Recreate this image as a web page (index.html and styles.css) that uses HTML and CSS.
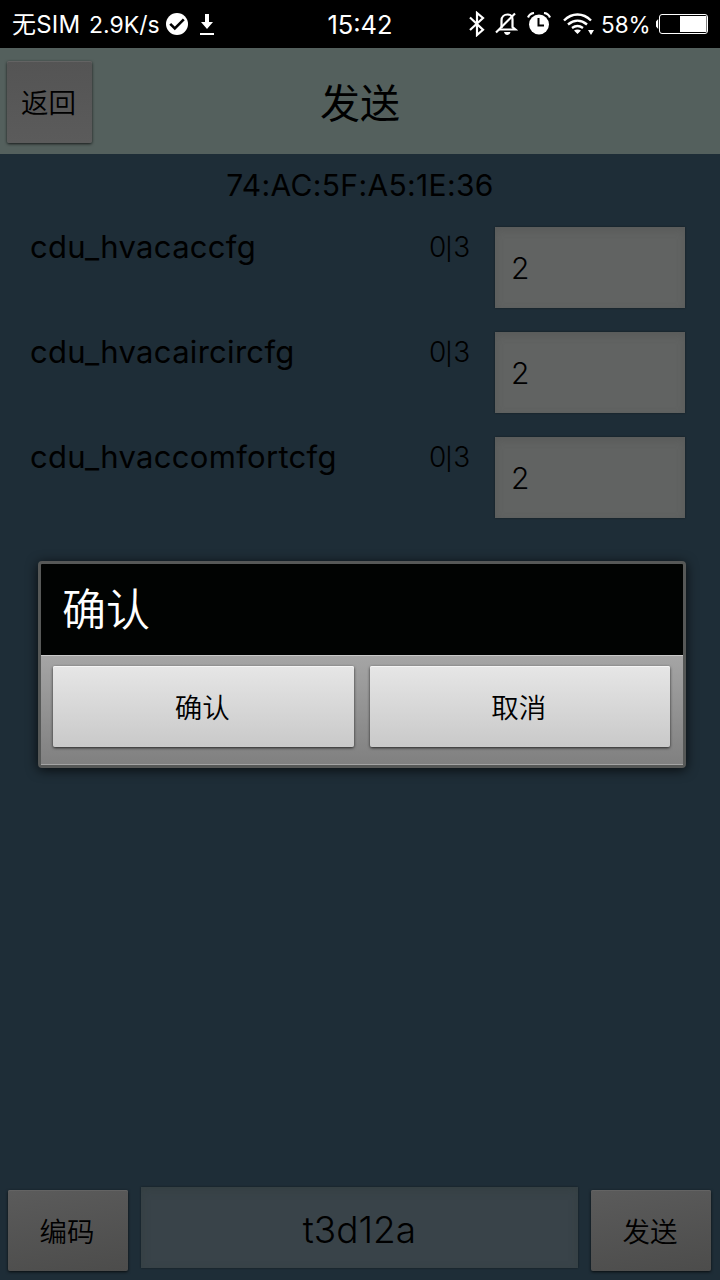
FILE: index.html
```html
<!DOCTYPE html>
<html lang="zh-CN">
<head>
<meta charset="utf-8">
<title>发送</title>
<link rel="stylesheet" href="styles.css">
</head>
<body>
<div class="screen">
  <div class="status">
    <div class="status-left">
      <span class="carrier">无SIM</span>
      <span class="speed">2.9K/s</span>
      <svg class="ic-check" width="22" height="22" viewBox="0 0 22 22"><circle cx="11" cy="11" r="11" fill="#fff"/><path d="M4.200 10.800l4.600 4.600 9-9" fill="none" stroke="#000" stroke-width="2.600"/></svg>
      <svg class="ic-down" width="14" height="22" viewBox="0 0 14 22"><path d="M5 0h4v8h4l-6 7-6-7h4zM0 19h14v2H0z" fill="#fff"/></svg>
    </div>
    <div class="clock">15:42</div>
    <div class="status-right">
      <svg class="ic-bt" width="16" height="26" viewBox="0 0 16 26"><path d="M1 6.500l13 12.300-6 5.200V2l6 5L1 19" fill="none" stroke="#fff" stroke-width="2.200"/></svg>
      <svg class="ic-bell" width="23" height="24" viewBox="0 0 23 24"><path d="M4 17.500h16.500l-3-2.500V7.500c0-3-2-5-5-5s-6 2-6 6V16" fill="none" stroke="#fff" stroke-width="2.200"/><path d="M1 20.500L20 1.500" stroke="#fff" stroke-width="2.200"/><path d="M9 20h6.500c-.8 4-5.700 4-6.500 0z" fill="#fff"/></svg>
      <svg class="ic-alarm" width="24" height="23" viewBox="0 0 24 23"><circle cx="12" cy="12.500" r="10" fill="#fff"/><path d="M1 5.500C2 3 4.500 1.300 7 1M17 1c2.500.3 5 2 6 4.500" fill="none" stroke="#fff" stroke-width="2.200"/><path d="M11.500 6v7.500H17" fill="none" stroke="#000" stroke-width="2"/></svg>
      <svg class="ic-wifi" width="31" height="23" viewBox="0 0 31 23"><g fill="none" stroke="#fff" stroke-width="2.400"><path d="M1 7.500c8-8 19-8 27 0"/><path d="M5 11.500c6-5 13-5 19 0"/><path d="M9 15c4-2.800 7-2.800 11 0"/></g><path d="M11 17.500c2-1.300 5-1.300 7 0L14.500 21zM25 17h6l-3 5z" fill="#fff"/></svg>
      <span class="pct">58%</span>
      <svg class="ic-batt" width="53" height="20" viewBox="0 0 53 20"><rect x="3.500" y=".5" width="48" height="19" rx="2.500" fill="none" stroke="#fff" stroke-width="1"/><path d="M24 2h26.500v16H24zM0 7.500L2.200 5v10L0 12.500z" fill="#fff"/></svg>
    </div>
  </div>
  <header class="header">
    <div class="btn dim back">返回</div>
    <h1 class="title">发送</h1>
    <div class="header-end"></div>
  </header>
  <main class="content">
    <div class="mac"><span>74:AC:5F:A5:1E:36</span></div>
    <div class="row"><span class="name">cdu_hvacaccfg</span><span class="range">0<span class="bar">|</span>3</span><div class="field">2</div></div>
    <div class="row"><span class="name">cdu_hvacaircircfg</span><span class="range">0<span class="bar">|</span>3</span><div class="field">2</div></div>
    <div class="row"><span class="name">cdu_hvaccomfortcfg</span><span class="range">0<span class="bar">|</span>3</span><div class="field">2</div></div>
  </main>
  <footer class="footer">
    <div class="btn dim side">编码</div>
    <div class="code">t3d12a</div>
    <div class="btn dim side">发送</div>
  </footer>
  <div class="dialog">
    <div class="dialog-title">确认</div>
    <div class="dialog-actions">
      <div class="btn lit">确认</div>
      <div class="btn lit">取消</div>
    </div>
  </div>
</div>
</body>
</html>
```
FILE: styles.css
```css
* { box-sizing: border-box; }
body { margin: 0; background: #1e2d37; }
.screen {
  position: relative;
  width: 720px;
  height: 1280px;
  display: flex;
  flex-direction: column;
  overflow: hidden;
  background: #1e2d37;
  color: #000;
  font-family: Inter, "Noto Sans CJK SC", sans-serif;
  white-space: nowrap;
}

/* Status bar */
.status {
  height: 48px;
  display: grid;
  grid-template-columns: 1fr auto 1fr;
  align-items: center;
  padding: 0 12px;
  background: #000;
  color: #fff;
}
.status-left, .status-right { display: flex; align-items: center; height: 48px; }
.status-right { justify-content: flex-end; padding-bottom: 2px; }
.status-left { padding-bottom: 4px; }
.carrier { font-size: 24px; line-height: 48px; width: 68px; letter-spacing: 0.2px; padding-top: 5px; }
.speed { font-size: 23px; line-height: 48px; width: 70px; margin-left: 9px; padding-top: 5px; }
.ic-check { margin-left: 7px; margin-top: 2px; }
.ic-down { margin-left: 12px; margin-top: 5px; }
.clock { font-size: 25.5px; line-height: 48px; padding-top: 1px; }
.ic-bt { margin-top: 1px; }
.ic-bell { margin-left: 10px; }
.ic-alarm { margin-left: 9px; }
.ic-wifi { margin-left: 12px; margin-top: 1px; }
.pct { font-size: 22.5px; width: 48px; margin-left: 7px; padding-top: 1px; }
.ic-batt { margin-left: 7px; margin-right: -1px; }

/* Header */
.header {
  height: 106px;
  display: grid;
  grid-template-columns: 85px 1fr 85px;
  align-items: center;
  padding: 0 7px;
  background: #54605d;
}
.title { margin: 0; text-align: center; font-size: 40px; font-weight: 400; line-height: 60px; padding-top: 6px; }

/* Buttons */
.btn {
  height: 82px;
  display: flex;
  align-items: center;
  justify-content: center;
  padding-right: 2px;
  padding-bottom: 1px;
  border-radius: 2px;
  font-size: 27.5px;
  font-weight: 350;
}
.dim {
  background: linear-gradient(170deg, #5b5b5b, #4c4c4b);
  box-shadow: 0 1px 3px rgba(0, 0, 0, .75), inset 0 1px 0 #636363;
}
.lit {
  flex: 1;
  background: linear-gradient(#e6e6e6, #c9c9c9);
  box-shadow: 0 1px 3px rgba(0, 0, 0, .75), inset 0 1px 0 #f4f4f4;
}
.back { background: linear-gradient(#545454, #5b5b5b); margin-top: 1px; }

/* Parameter list */
.content { flex: 1; }
.mac { height: 73px; padding-top: 12px; text-align: center; font-size: 30px; letter-spacing: 0.35px; line-height: 38px; }
.row { height: 105px; display: flex; padding: 0 35px 0 30px; }
.name { width: 399px; font-size: 31px; letter-spacing: 0.3px; line-height: 40px; }
.range { width: 66px; font-size: 28px; font-weight: 300; line-height: 40px; }
.bar { display: inline-block; width: 7px; font-size: 22px; font-weight: 400; line-height: 22px; text-indent: -1px; }
.field {
  width: 190px;
  height: 81px;
  padding: 1px 0 0 16px;
  font-size: 30px;
  font-weight: 300;
  line-height: 81px;
  background: #616362;
  box-shadow: inset 0 3px 8px rgba(70, 70, 70, .3), 0 0 2px rgba(0, 0, 0, .4);
}

/* Footer */
.footer { height: 94px; display: flex; padding: 0 9px 0 8px; gap: 13px; }
.side { width: 120px; height: 81px; margin-top: 4px; }
.code {
  flex: 1;
  height: 81px;
  margin-top: 1px;
  padding-top: 1px;
  background: #394349;
  box-shadow: inset 0 3px 8px rgba(50, 62, 62, .6), 0 0 2px rgba(0, 0, 0, .4);
  text-align: center;
  font-size: 37px;
  font-weight: 300;
  line-height: 84px;
}

/* Confirmation dialog, drawn over the page */
.dialog {
  position: absolute;
  left: 38px;
  top: 561px;
  width: 648px;
  height: 207px;
  border: 3px solid #565857;
  border-radius: 4px;
  background: #010302;
  box-shadow: 0 2px 12px rgba(0, 0, 0, .75);
}
.dialog-title { height: 91px; padding-left: 21px; color: #fff; font-size: 44px; font-weight: 350; line-height: 92px; }
.dialog-actions {
  height: 110px;
  display: flex;
  gap: 16px;
  padding: 10px 13px 0 12px;
  border-top: 1px solid #c9c9c9;
  border-bottom: 1px solid #a4a4a4;
  background: linear-gradient(#a5a5a5, #808080);
}
.lit { height: 81px; }
```
